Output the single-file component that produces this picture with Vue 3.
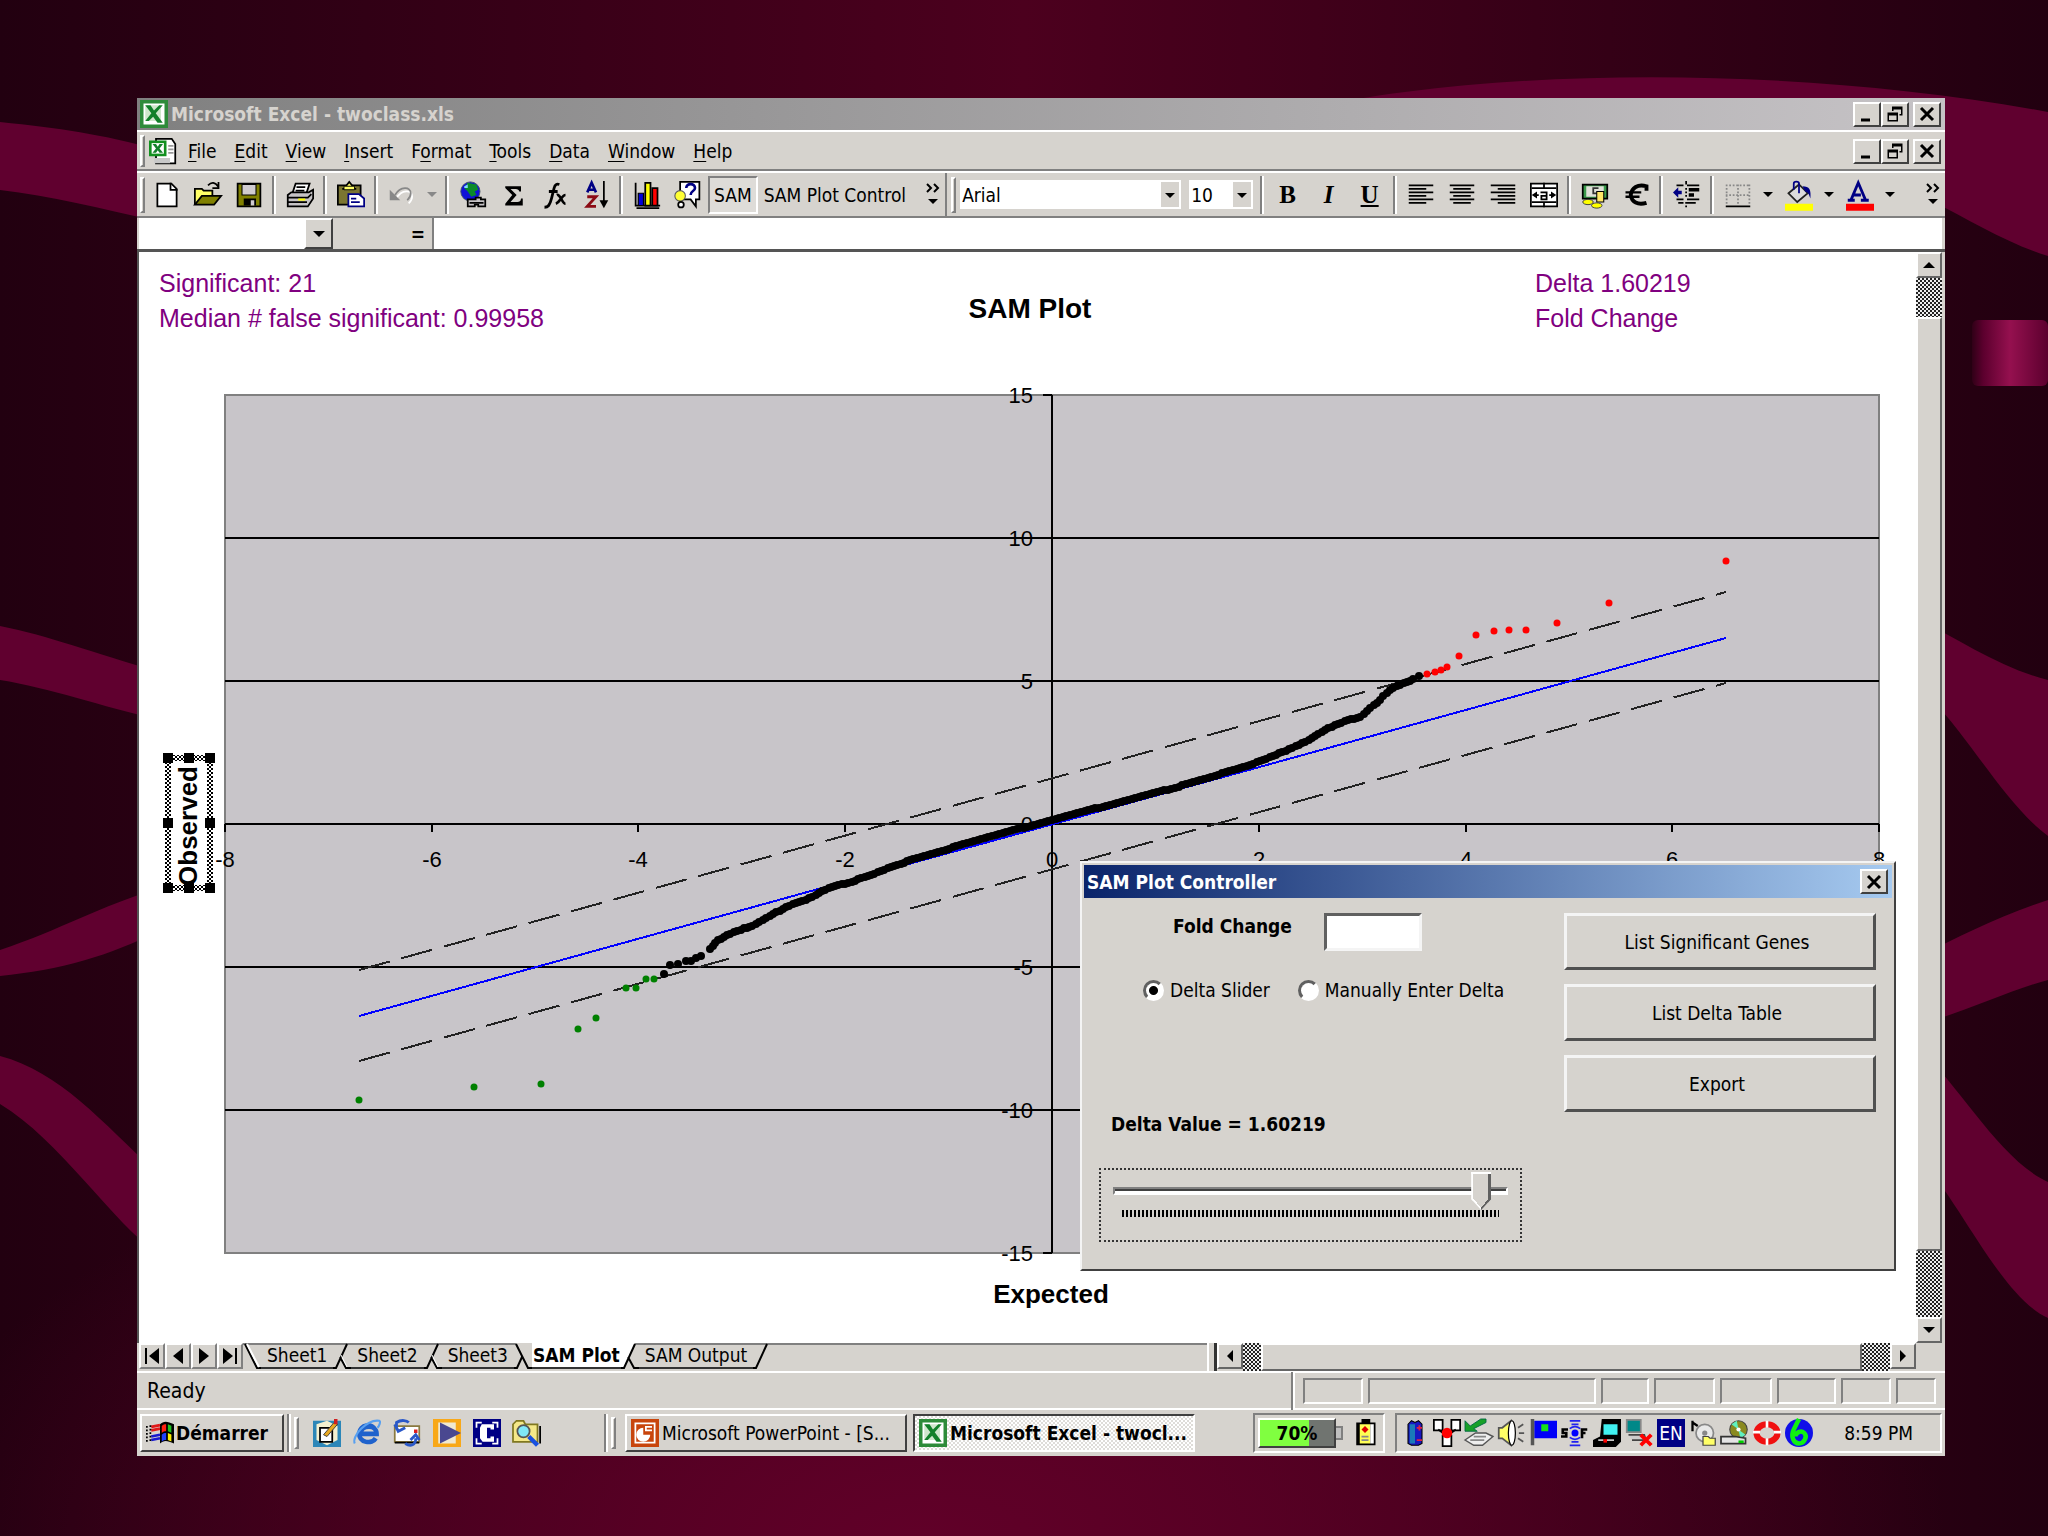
<template>
  <div class="desktop">
    <!-- Slide background -->
    <svg class="waves" viewBox="0 0 2048 1536" preserveAspectRatio="none" aria-hidden="true">
      <defs>
        <linearGradient id="knot" x1="0" x2="1" y1="0" y2="0">
          <stop offset="0" stop-color="#5c002e" stop-opacity="0.2" />
          <stop offset="0.15" stop-color="#5c002e" />
          <stop offset="0.5" stop-color="#95104f" />
          <stop offset="1" stop-color="#5c002e" />
        </linearGradient>
      </defs>
      <g fill="#60002f">
        <path d="M0 122 C60 128 100 134 160 150 V222 C100 208 50 196 0 190 Z" />
        <path d="M0 626 C50 636 90 652 160 672 V720 C100 706 50 688 0 680 Z" />
        <path d="M160 888 C100 906 60 930 0 950 V976 C60 970 110 956 160 930 Z" />
        <path d="M0 1056 C60 1072 100 1120 160 1176 V1256 C110 1220 60 1140 0 1104 Z" />
        <path d="M1300 110 C1500 66 1800 66 2048 112 V256 C1980 236 1900 170 1800 150 Z" />
        <path d="M1920 620 C1960 640 2000 668 2048 680 V836 C2000 800 1960 720 1920 690 Z" />
        <path d="M2048 900 C2000 916 1960 936 1920 956 V1024 C1960 1014 2010 990 2048 980 Z" />
        <path d="M1920 1050 C1960 1086 2000 1160 2048 1182 V1318 C2000 1296 1960 1200 1920 1160 Z" />
      </g>
      <rect x="1972" y="320" width="76" height="66" rx="6" fill="url(#knot)" />
    </svg>

    <main class="window">
      <header class="title-bar">
        <svg class="icon" viewBox="0 0 16 16" v-html="icons.excel"></svg>
        <span class="title-text">Microsoft Excel - twoclass.xls</span>
        <span class="win-buttons">
          <button v-for="b in winButtons" :key="b" :class="['win-button', b]" :aria-label="b">
            <svg viewBox="0 0 12 12" v-html="icons[b]"></svg>
          </button>
        </span>
      </header>

      <nav class="menu-bar">
        <span class="grip"></span>
        <svg class="icon" viewBox="0 0 16 16" v-html="icons.book"></svg>
        <button v-for="m in menus" :key="m.text" class="menu-item">
          {{ m.text.slice(0, m.key) }}<u>{{ m.text[m.key] }}</u>{{ m.text.slice(m.key + 1) }}
        </button>
        <span class="win-buttons">
          <button v-for="b in winButtons" :key="b" :class="['win-button', b]" :aria-label="b">
            <svg viewBox="0 0 12 12" v-html="icons[b]"></svg>
          </button>
        </span>
      </nav>

      <div class="toolbars">
        <div class="toolbar standard">
          <span class="grip"></span>
          <template v-for="(t, i) in standardTools" :key="i">
            <span v-if="t === '|'" class="tool-sep"></span>
            <button v-else-if="t === 'v'" class="drop disabled" aria-label="More"></button>
            <button v-else class="tool" :aria-label="t">
              <svg class="icon" viewBox="0 0 16 16" v-html="icons[t]"></svg>
            </button>
          </template>
          <button class="text-tool pressed">SAM</button>
          <button class="text-tool">SAM Plot Control</button>
          <button class="more" aria-label="More buttons">
            <svg viewBox="0 0 16 28" v-html="icons.more"></svg>
          </button>
        </div>
        <div class="toolbar format">
          <span class="grip"></span>
          <span class="combo font">
            <select aria-label="Font"><option>Arial</option></select>
          </span>
          <span class="combo size">
            <select aria-label="Font size"><option>10</option></select>
          </span>
          <template v-for="(t, i) in formatTools" :key="i">
            <span v-if="t === '|'" class="tool-sep"></span>
            <button v-else-if="t === 'v'" class="drop" aria-label="More"></button>
            <button v-else-if="t.length === 1" :class="['tool', 'letter', 'letter-' + t]">{{ t }}</button>
            <button v-else class="tool" :aria-label="t">
              <svg class="icon" viewBox="0 0 16 16" v-html="icons[t]"></svg>
            </button>
          </template>
          <button class="more" aria-label="More buttons">
            <svg viewBox="0 0 16 28" v-html="icons.more"></svg>
          </button>
        </div>
      </div>

      <div class="formula-bar">
        <input class="name-box" type="text" aria-label="Name box" />
        <button class="name-drop" aria-label="Names"><i class="arrow down"></i></button>
        <button class="equals">=</button>
        <input class="formula" type="text" aria-label="Formula" />
      </div>

      <section class="sheet">
        <svg class="chart" viewBox="0 0 1777 1091" role="img" aria-label="SAM Plot">
          <rect x="86" y="143" width="1654" height="858" fill="#c8c5c9" stroke="#808080" stroke-width="2" />
          <g stroke="#000" stroke-width="2" shape-rendering="crispEdges">
            <line v-for="v in [10, 5, 0, -5, -10]" :key="v" x1="86" x2="1740" :y1="py(v)" :y2="py(v)" />
            <line x1="913" x2="913" y1="143" y2="1001" />
            <line v-for="v in yTicks" :key="'y' + v" x1="904" x2="913" :y1="py(v)" :y2="py(v)" />
            <line v-for="v in xTicks" :key="'x' + v" :x1="px(v)" :x2="px(v)" y1="572" y2="580" />
          </g>
          <g class="tick-text">
            <text v-for="v in yTicks" :key="'ty' + v" x="894" :y="py(v) + 8" text-anchor="end">{{ v }}</text>
            <text v-for="v in xTicks" :key="'tx' + v" :x="px(v)" y="615" text-anchor="middle">{{ v }}</text>
          </g>
          <g stroke-width="2" shape-rendering="crispEdges">
            <line :x1="px(-6.7)" :y1="py(-6.7)" :x2="px(6.52)" :y2="py(6.52)" stroke="#0000ff" />
            <line v-for="d in [1.6, -1.6]" :key="d" :x1="px(-6.7)" :y1="py(-6.7 + d)" :x2="px(6.52)" :y2="py(6.52 + d)"
              stroke="#222" stroke-dasharray="32 12" />
          </g>
          <circle v-for="(p, i) in curveDots" :key="'c' + i" :cx="px(p[0])" :cy="py(p[1])" r="4" fill="#000" />
          <circle v-for="(p, i) in positive" :key="'p' + i" :cx="px(p[0])" :cy="py(p[1])" r="3.5" fill="#ff0000" />
          <circle v-for="(p, i) in negative" :key="'n' + i" :cx="px(p[0])" :cy="py(p[1])" r="3.5" fill="#008000" />

          <g class="note-text">
            <text x="20" y="40">Significant: 21</text>
            <text x="20" y="75">Median # false significant: 0.99958</text>
            <text x="1396" y="40">Delta 1.60219</text>
            <text x="1396" y="75">Fold Change</text>
          </g>
          <text class="plot-title" x="891" y="66" text-anchor="middle">SAM Plot</text>
          <text class="axis-title" x="912" y="1051" text-anchor="middle">Expected</text>

          <!-- selected axis title -->
          <defs>
            <pattern id="hatch" width="4" height="4" patternUnits="userSpaceOnUse">
              <rect width="4" height="4" fill="#fff" />
              <rect width="2" height="2" fill="#000" />
              <rect x="2" y="2" width="2" height="2" fill="#000" />
            </pattern>
          </defs>
          <rect x="29" y="506" width="42" height="130" fill="none" stroke="url(#hatch)" stroke-width="6" />
          <g fill="#000">
            <template v-for="hx in [24, 45, 66]" :key="hx">
              <rect v-for="hy in [501, 566, 631]" v-show="hx !== 45 || hy !== 566" :key="hy" :x="hx" :y="hy" width="10" height="10" />
            </template>
          </g>
          <text class="axis-title" transform="translate(58 574) rotate(-90)" text-anchor="middle">Observed</text>
        </svg>

        <form class="dialog" @submit.prevent>
          <div class="dialog-title">
            <span>SAM Plot Controller</span>
            <button type="button" class="win-button" aria-label="close">
              <svg viewBox="0 0 12 12" v-html="icons.close"></svg>
            </button>
          </div>
          <div class="dialog-body">
            <div class="settings">
              <div class="fold-row">
                <label for="fold">Fold Change</label>
                <input id="fold" v-model="fold" type="text" />
              </div>
              <div class="mode-row">
                <input id="slider-mode" v-model="mode" type="radio" name="mode" value="slider" />
                <label for="slider-mode">Delta Slider</label>
                <input id="manual-mode" v-model="mode" type="radio" name="mode" value="manual" />
                <label for="manual-mode">Manually Enter Delta</label>
              </div>
              <label class="delta-label" for="delta">Delta Value = 1.60219</label>
              <div class="slider-box">
                <input id="delta" v-model="delta" type="range" min="0" max="100" />
                <div class="slider-ticks"></div>
              </div>
            </div>
            <div class="actions">
              <button v-for="a in actions" :key="a" type="button">{{ a }}</button>
            </div>
          </div>
        </form>

        <div class="scroll vertical">
          <button class="scroll-button" aria-label="Scroll up"><i class="arrow up"></i></button>
          <span class="dither dither-top"></span>
          <span class="thumb"></span>
          <span class="dither dither-bottom"></span>
          <button class="scroll-button" aria-label="Scroll down"><i class="arrow down"></i></button>
        </div>
      </section>

      <div class="tab-row">
        <button v-for="n in ['first', 'prev', 'next', 'last']" :key="n" class="nav-button" :aria-label="n">
          <svg viewBox="0 0 20 20" v-html="icons[n]"></svg>
        </button>
        <nav class="tabs">
          <template v-for="t in tabs" :key="t.text">
            <svg class="slant" viewBox="0 0 18 26" v-html="slants[t.edge]"></svg>
            <button :class="['tab', { active: t.active }]">{{ t.text }}</button>
          </template>
          <svg class="slant" viewBox="0 0 18 26" v-html="slants.end"></svg>
        </nav>
        <span class="splitter"></span>
        <div class="scroll horizontal">
          <button class="scroll-button" aria-label="Scroll left"><i class="arrow left"></i></button>
          <span class="dither dither-left"></span>
          <span class="thumb"></span>
          <span class="dither dither-right"></span>
          <button class="scroll-button" aria-label="Scroll right"><i class="arrow right"></i></button>
        </div>
        <span class="corner"></span>
      </div>

      <div class="status-bar">
        <span class="ready">Ready</span>
        <span class="tool-sep"></span>
        <span v-for="n in 8" :key="n" :class="['cell', 'cell-' + n]"></span>
      </div>

      <footer class="taskbar">
        <button class="start">
          <svg class="icon" viewBox="0 0 16 16" v-html="icons.windows"></svg>Démarrer
        </button>
        <span class="tool-sep"></span>
        <span class="grip"></span>
        <div class="launch">
          <button v-for="q in launch" :key="q" :aria-label="q">
            <svg class="icon" viewBox="0 0 16 16" v-html="icons[q]"></svg>
          </button>
        </div>
        <span class="tool-sep"></span>
        <span class="grip"></span>
        <button class="task">
          <svg class="icon" viewBox="0 0 16 16" v-html="icons.powerpoint"></svg>
          <span>Microsoft PowerPoint - [S...</span>
        </button>
        <button class="task current">
          <svg class="icon" viewBox="0 0 16 16" v-html="icons.excel"></svg>
          <span>Microsoft Excel - twocl...</span>
        </button>
        <div class="power">
          <span class="gauge">70%</span><span class="nub"></span>
          <svg class="icon" viewBox="0 0 16 16" v-html="icons.battery"></svg>
        </div>
        <div class="tray">
          <template v-for="t in tray" :key="t">
            <span v-if="t === 'EN'" class="lang">EN</span>
            <svg v-else class="icon" viewBox="0 0 16 16" v-html="icons[t]"></svg>
          </template>
          <time>8:59 PM</time>
        </div>
      </footer>
    </main>
  </div>
</template>

<script setup>
import { ref, computed } from 'vue'

const fold = ref('')
const mode = ref('slider')
const delta = ref(96)

const winButtons = ['minimize', 'restore', 'close']
const menus = [
  { text: 'File', key: 0 },
  { text: 'Edit', key: 0 },
  { text: 'View', key: 0 },
  { text: 'Insert', key: 0 },
  { text: 'Format', key: 1 },
  { text: 'Tools', key: 0 },
  { text: 'Data', key: 0 },
  { text: 'Window', key: 0 },
  { text: 'Help', key: 0 }
]
const standardTools = ['new', 'open', 'save', '|', 'print', '|', 'paste', '|', 'undo', 'v', '|', 'globe', 'sum', 'fx', 'sort', '|', 'chart', 'help']
const formatTools = ['|', 'B', 'I', 'U', '|', 'left', 'center', 'right', 'merge', '|', 'money', 'euro', '|', 'indent', '|', 'borders', 'v', 'fill', 'v', 'color', 'v']
const actions = ['List Significant Genes', 'List Delta Table', 'Export']
const tabs = [
  { text: 'Sheet1', edge: 'back' },
  { text: 'Sheet2', edge: 'slash' },
  { text: 'Sheet3', edge: 'slash' },
  { text: 'SAM Plot', edge: 'toActive', active: true },
  { text: 'SAM Output', edge: 'fromActive' }
]
const launch = ['notes', 'explorer', 'outlook', 'player', 'citrix', 'search']
const tray = ['cell', 'nodes', 'eject', 'speaker', 'flag', 'signal', 'laptop', 'network', 'EN', 'sound', 'disk', 'ring', 'swirl']

// chart
const yTicks = [15, 10, 5, 0, -5, -10, -15]
const xTicks = [-8, -6, -4, -2, 0, 2, 4, 6, 8]
const px = (v) => Math.round(913 + v * 103.4)
const py = (v) => Math.round(572 - v * 28.6)

const positive = [
  [3.63, 5.24], [3.7, 5.3], [3.76, 5.37], [3.82, 5.5], [3.94, 5.87], [4.1, 6.61],
  [4.27, 6.74], [4.42, 6.79], [4.58, 6.79], [4.88, 7.04], [5.39, 7.72], [6.52, 9.21]
]
const negative = [
  [-6.7, -9.65], [-5.59, -9.21], [-4.94, -9.09], [-4.58, -7.17], [-4.41, -6.8],
  [-4.12, -5.75], [-4.02, -5.75], [-3.93, -5.43], [-3.85, -5.43]
]
const curve = [
  [-3.75, -5.25], [-3.69, -4.93], [-3.62, -4.88], [-3.54, -4.8], [-3.49, -4.78], [-3.44, -4.7],
  [-3.39, -4.62], [-3.31, -4.38], [-3.23, -4.06], [-3.11, -3.84], [-2.98, -3.65], [-2.9, -3.56],
  [-2.73, -3.2], [-2.54, -2.85], [-2.35, -2.6], [-2.16, -2.24], [-1.97, -2.05], [-1.78, -1.83],
  [-1.59, -1.55], [-1.34, -1.23], [-0.96, -0.82], [-0.58, -0.41], [0, 0.13], [0.56, 0.68],
  [1.19, 1.27], [1.82, 1.96], [2.01, 2.19], [2.26, 2.56], [2.45, 2.88], [2.64, 3.29],
  [2.83, 3.6], [2.98, 3.74], [3.08, 4.06], [3.17, 4.34], [3.27, 4.7], [3.4, 4.93],
  [3.49, 5.06], [3.55, 5.16]
]
const curveDots = computed(() => {
  const dots = [curve[0]]
  for (let i = 1; i < curve.length; i++) {
    const [x0, y0] = curve[i - 1]
    const [x1, y1] = curve[i]
    const steps = x1 < -3.3 || x1 > 3.5 ? 1 : Math.ceil((x1 - x0) / 0.035)
    for (let s = 1; s <= steps; s++) {
      dots.push([x0 + ((x1 - x0) * s) / steps, y0 + ((y1 - y0) * s) / steps])
    }
  }
  return dots
})

const slants = {
  back: '<path d="M2 1L14 25H18" fill="none" stroke="#000" stroke-width="2"/><path d="M4 1L16 24" stroke="#fff" stroke-width="2"/>',
  slash: '<path d="M0 25H3L14 1M7 14L13 25H18" fill="none" stroke="#000" stroke-width="2"/><path d="M8 12L14 24" stroke="#fff" stroke-width="1"/>',
  toActive: '<path d="M2 1L15 25L18 25V0H2Z" fill="#fff"/><path d="M2 1L13 25L18 25V0H2Z" fill="#d6d3ce"/><path d="M0 25H3L8 14M2 1L14 25H18" fill="none" stroke="#000" stroke-width="2"/>',
  fromActive: '<path d="M0 0H14L3 25H0Z" fill="#fff"/><path d="M0 25H3L14 1M7 14L13 25H18" fill="none" stroke="#000" stroke-width="2"/>',
  end: '<path d="M0 25H3L14 1" fill="none" stroke="#000" stroke-width="2"/>'
}

const lines = (rows) => rows.map(([x, y, w]) => `<rect x="${x}" y="${y}" width="${w}" height="1"/>`).join('')

const icons = {
  minimize: '<path d="M2 9h6v2H2z"/>',
  restore: '<path d="M4 1h7v6H9v-1h1V3H5v1H4zM1 5h7v6H1zM2 7v3h5V7z" fill-rule="evenodd"/>',
  close: '<path d="M2 2L10 10M10 2L2 10" stroke="#000" stroke-width="2"/>',
  more: '<path d="M1 3l4 4-4 4M8 3l4 4-4 4" fill="none" stroke="#000" stroke-width="2"/><path d="M2 18h10l-5 5z"/>',
  first: '<path d="M3 2h2v16H3zM17 2v16L7 10z"/>',
  prev: '<path d="M15 2v16L5 10z"/>',
  next: '<path d="M5 2v16L15 10z"/>',
  last: '<path d="M3 2v16L13 10z"/><path d="M15 2h2v16h-2z"/>',
  excel: '<rect width="16" height="16" fill="#2e8b3a"/><path d="M2 2h12v12H2z" fill="#fff"/><path d="M3 3h9v9H3z" fill="#cfe6cc"/><path d="M3 3h3l2 3 3-3h2L9 7.500l4 5.500h-3L7.500 9.500 5 12H3l3.500-4.500z" fill="#12802a"/><path d="M3 12h6v1.500H3z" fill="#fff"/>',
  powerpoint: '<rect width="16" height="16" fill="#c8450c"/><path d="M2 2h12v12H2z" fill="#fff"/><path d="M3 3h10v10H3z" fill="#c8450c"/><path d="M7 5v4h4a4 4 0 1 1-4-4M8 4h4v1H9v1h3v1H8z" fill="#fff"/>',
  book: '<path d="M5 1h8l2 3v11H4V1z" fill="#fff" stroke="#000"/><path d="M3 12h9v3H3z" fill="#c8c8c8"/><path d="M11 5h3M11 7h3M11 9h3" stroke="#999"/><path d="M0 2h10v9H0z" fill="#12901f"/><path d="M1.500 3.500h7v6h-7z" fill="#fff"/><path d="M2 4h2l1 1.500L6 4h2L6 6.500 8 9H6L5 7.500 4 9H2l2-2.500z" fill="#12802a"/>',
  new: '<path d="M2.500 1.500h8l3 3v10h-11z" fill="#fff" stroke="#000"/><path d="M10 1v4h4" fill="none" stroke="#000"/>',
  open: '<path d="M.500 13.500v-9h4l1 1h5v3" fill="#ffff66" stroke="#000"/><path d="M.500 13.500l4-5h11l-4 5z" fill="#808000" stroke="#000"/><path d="M8 2.500c2-2 4-2 6 1M14 .5v3.500h-3.500" fill="none" stroke="#000"/>',
  save: '<path d="M1.500 1.500h13v13h-13z" fill="#808000" stroke="#000"/><path d="M4 2h8v6H4z" fill="#d0ccd0" stroke="#000" stroke-width=".6"/><path d="M5 10h7v4H5z"/><path d="M9 11h2v3H9z" fill="#d0ccd0"/>',
  print: '<path d="M5.500 1.500h8l-2 6h-8z" fill="#fff" stroke="#000"/><path d="M6 3.500h5M5.500 5.500h5" stroke="#000"/><path d="M1 8l2-1.500h10L15.500 5v5l-3 4.500H1z" fill="#c6c3c6" stroke="#000"/><path d="M1 9.500h11.500l2-2M1 12h11" stroke="#000" fill="none"/><path d="M7 10h4v1.200H7z" fill="#ffff00"/>',
  paste: '<path d="M.500 2.500h13v11H.500z" fill="#7b7531" stroke="#000"/><path d="M3 4.500h8M5 3l2-2.500L9 3" fill="#ff6" stroke="#000"/><path d="M4 3h6v2H4z" fill="#ffff66" stroke="#000" stroke-width=".5"/><path d="M6.500 7.500h6l3 2.500v4.500h-9z" fill="#fff" stroke="#000084"/><path d="M8 10h3M8 12h5" stroke="#000084"/>',
  undo: '<path d="M4 9c3-5 9-5 9-1 0 2-1 3-2 4" fill="none" stroke="#fff" transform="translate(.8 .8)"/><path d="M1 5v6h6z" fill="#888"/><path d="M4 8c3-5 9-5 9-1 0 2-1 3-2 4" fill="none" stroke="#888"/>',
  globe: '<circle cx="6.500" cy="6" r="5.500" fill="#1010d8" stroke="#456" stroke-width=".5"/><path d="M5 1l5 1 1 3-2 1 1 2-3 1-2-3-2-2z" fill="#0a8a2a"/><path d="M3 3l2-1v2H3z" fill="#7fd8ff"/><path d="M5 10.500h4.500v-1h3v1H15v4h-4v-1H9v1H5z" fill="#c6c3c6" stroke="#000"/><path d="M6 12.500h8" stroke="#000"/>',
  sum: '<path d="M3 3h9v3h-1c0-1-1-1.500-2-1.500H6L9.500 8 6 12h4c1 0 2-.5 2-2h1v4H3v-1l4-5-4-4z"/>',
  fx: '<path d="M2 15c2 0 3-1 4-5l1.500-6C8 2 9 1.500 10.500 2M4.500 6h5" fill="none" stroke="#000" stroke-width="1.600"/><path d="M9 8c2-1 3 5 5 5M14 8c-2 0-3 4-5.500 5" fill="none" stroke="#000" stroke-width="1.500"/>',
  sort: '<path d="M3 6.500L5.500 1 8 6.500M4 5h3" fill="none" stroke="#000084" stroke-width="1.500"/><path d="M3 9h5L3 14.500h5" fill="none" stroke="#8b0a14" stroke-width="1.600"/><path d="M12.500 0v13" stroke="#000"/><path d="M10 11h5l-2.500 4.500z"/>',
  chart: '<path d="M1.500 1v13h14" fill="none" stroke="#000"/><path d="M3 7h3v7H3z" fill="#0000d8" stroke="#000" stroke-width=".7"/><path d="M7 1h3v13H7z" fill="#ffff00" stroke="#000"/><path d="M11 4h3v10h-3z" fill="#ff0000" stroke="#000"/><path d="M2 15.500h13" stroke="#000"/>',
  help: '<path d="M3.500.500h11v10h-2v4l-3-4h-6z" fill="#fff" stroke="#000"/><path d="M7 4c0-3 5-3 5 0 0 2-2.500 1.500-2.500 4" fill="none" stroke="#000084" stroke-width="1.500"/><circle cx="3.500" cy="8.500" r="3" fill="#ffff33" stroke="#555" stroke-width=".6"/><circle cx="4" cy="13.500" r="1.600" fill="#fff" stroke="#000"/>',
  left: lines([[1, 2, 14], [1, 4, 10], [1, 6, 14], [1, 8, 10], [1, 10, 14], [1, 12, 10]]),
  center: lines([[1, 2, 14], [3, 4, 10], [1, 6, 14], [3, 8, 10], [1, 10, 14], [3, 12, 10]]),
  right: lines([[1, 2, 14], [5, 4, 10], [1, 6, 14], [5, 8, 10], [1, 10, 14], [5, 12, 10]]),
  merge: '<path d="M.500 1.500h15v13H.500z" fill="#fff" stroke="#000"/><path d="M1 4h14M1 12h14M8 1v3M8 12v3" stroke="#000"/><path d="M1 8l3-2v4zM15 8l-3-2v4z"/><path d="M3 8h2M11 8h2M6 6.500h3.500v4H6.500V8.500h3" fill="none" stroke="#000"/>',
  money: '<path d="M1 2h14v8H1z" fill="#3a9a4a" stroke="#000"/><path d="M3 3h10v6H3z" fill="#e0e0d8"/><path d="M10 4H7v3h3" fill="none" stroke="#333"/><path d="M9 6h4v6H9z" fill="#ffe766" stroke="#000" stroke-width=".6"/><ellipse cx="4" cy="12" rx="3" ry="1.500" fill="#ffff00" stroke="#333" stroke-width=".5"/><ellipse cx="9" cy="14" rx="3" ry="1.500" fill="#ffff00" stroke="#333" stroke-width=".5"/>',
  euro: '<path d="M14 5.500V3C9 1.500 5.500 4 5 8c.5 4 4 6 9 4.500" fill="none" stroke="#000" stroke-width="2.200"/><path d="M2 6.500h9M2 9h8" stroke="#000" stroke-width="1.400"/>',
  indent: '<path d="M2 2.500h4M8 2.500h7M2 10.500h4M8 10.500h7M3 12.500h3M8 12.500h5" stroke="#000"/><path d="M7.500 0v2M7.500 4v1M7.500 6v1M7.500 8v1M7.500 12v1M7.500 14v1" stroke="#000"/><path d="M9 4h6v2H9zM9 7h3v2H9z"/><path d="M0 6.500l3-3v2h2v2H3v2z" fill="#000084"/>',
  borders: '<path d="M1.500 2v11M14.500 2v11M8 2v11M1 2.500h14M1 8h14" stroke="#888" stroke-dasharray="1 1"/><path d="M1 14h14v1H1z"/>',
  fill: '<path d="M0 13h16v4H0z" fill="#ffff00"/><path d="M2 7l6-5 5 5-6 5z" fill="#dcdcdc" stroke="#222"/><path d="M5 5V1.500C5 0 8 0 8 1.500V7" fill="none" stroke="#000084"/><path d="M10 3c4 0 5 2 4.500 7-1-3-1-3-3-4z" fill="#000084"/>',
  color: '<path d="M0 13h16v4H0z" fill="#ff0000"/><path d="M1 11h4M8.500 11h4.500M3 10.500L7 1l4 9.500M4.500 8h4" fill="none" stroke="#000084" stroke-width="1.600"/>',
  windows: '<path d="M8 3c2-2 4-2 8 0v11c-4-2-6-2-8 0z" fill="#000"/><path d="M9 4c1-1 1.500-1 2.500-1v4C10.500 7 10 7 9 8z" fill="#ff2010"/><path d="M12.500 3l2 .8v4l-2-.8z" fill="#20c020"/><path d="M9 9c1-1 1.500-1 2.500-1v4c-1 0-1.500 0-2.500 1z" fill="#2040ff"/><path d="M12.500 8l2 .8v4l-2-.8z" fill="#ffee00"/><path d="M3 4.500l5-1M3 6.500l5-1" stroke="#e01818" stroke-width="1.500"/><path d="M3 10l5-1M3 12l5-1" stroke="#1818d0" stroke-width="1.500"/><path d="M.500 4v9M2.500 3.500v10" stroke="#000" stroke-dasharray="1 1"/>',
  notes: '<path d="M0 1h16v15H0z" fill="#2c86b8"/><path d="M2 3l6-2 6 3v8l-6 3-6-3z" fill="#f4f0d0"/><path d="M4 5h7v8H4z" fill="#fff" stroke="#000"/><path d="M6 9l6-7 2 1-6 7z" fill="#e8a820" stroke="#333" stroke-width=".5"/><path d="M12 0h2v3h-2z" fill="#d02020"/>',
  explorer: '<path d="M13 6.500A5 5 0 0 0 3.500 8c0 6 7.500 6.500 9.500 3M4 8.500h9.500C13.500 3 5 3 4 8.500" fill="none" stroke="#1f62cc" stroke-width="2.600"/><path d="M1 14C-1 10 8 0 15 1c1 .5 0 3-1 4" fill="none" stroke="#58a0f0" stroke-width="1.200"/>',
  outlook: '<path d="M1 4h14v9H1z" fill="#fff" stroke="#8a7a40"/><path d="M1 13.500h14" stroke="#000"/><path d="M12 6h2v2h-2z" fill="#e02020"/><path d="M2 6V2c3-2 6-1 7 0M1 3l2 4 4-2" fill="none" stroke="#2a58c8" stroke-width="1.600"/><path d="M7 14c3 2 6 1 6-3M10 12l3-3 2 3" fill="none" stroke="#2a58c8" stroke-width="1.600"/>',
  player: '<path d="M0 0h16v16H0z" fill="#f8a818"/><path d="M3 2h10v12H3z" fill="#f0e8d0"/><path d="M4 2l12 6-12 6z" fill="#4a4890"/>',
  citrix: '<path d="M0 0h16v16H0z" fill="#000084"/><path d="M2 5V2h3M11 2h3v3M2 11v3h3M14 11v3h-3" fill="none" stroke="#fff"/><path d="M12 6V3H5L4 5v6l1.500 2H12v-3h-2v1H8V5h2v1z" fill="#fff"/>',
  search: '<path d="M0 3l2-2h4l1 2h7v10H0z" fill="#f4e888" stroke="#807820"/><path d="M15.500 4v10" stroke="#000"/><circle cx="6" cy="7" r="3.500" fill="#7fe8f8" stroke="#555"/><path d="M9 10l5 5" stroke="#1850e0" stroke-width="2.500"/>',
  battery: '<path d="M6 0h5v2h3v13H3V2h3z" fill="#000"/><path d="M5 3h6v11H5z" fill="#ffff55"/><path d="M11 3h2v11h-2z" fill="#fff"/><path d="M8 4l2 2-2 2-2-2z" fill="#d00"/><path d="M6 10h4M6 12h4" stroke="#888"/>',
  cell: '<path d="M4 3l2-2 2 1 2-1 2 2v11l-2 1H6l-2-1z" fill="#1818c0" stroke="#000" stroke-width=".6"/><path d="M5 3h3v11H5z" fill="#1a7ab8"/><path d="M9 5h3M10.500 3.500v3M9 12h3" stroke="#e02040"/>',
  nodes: '<path d="M.500.500h5v6h-5zM10.500.500h5v6h-5zM5.500 9.500h5v6h-5z" fill="#fff" stroke="#000"/><path d="M3 6l4 3M13 6l-4 3" stroke="#000"/><circle cx="8" cy="8" r="3" fill="#f00"/>',
  eject: '<path d="M0 12l6-4h6l4 2-6 5H5z" fill="#eee" stroke="#555" stroke-width=".8"/><path d="M3 12h8M5 10h7" stroke="#888"/><path d="M0 1v6h7L5 5.500 12 2V0H9L3 4z" fill="#18a028" stroke="#064" stroke-width=".5"/>',
  speaker: '<path d="M1 5h2l5-4v14l-5-4H1z" fill="#ffff66" stroke="#555"/><ellipse cx="8.500" cy="8" rx="2" ry="7" fill="#fff" stroke="#000" stroke-width=".7"/><path d="M12 5l3-2M12.500 8h3M12 11l3 2" stroke="#555"/>',
  flag: '<path d="M3 1h13v10H3z" fill="#0000f8"/><path d="M7 3h4v4H7z" fill="#18e018"/><path d="M1 0h2v15H1z" fill="#555"/>',
  signal: '<path d="M5 1h6M6 3h4M5 15h6M6 13h4M5 5.500c2-1.500 4-1.500 6 0M5 10.500c2 1.500 4 1.500 6 0" stroke="#2020f0" fill="none"/><circle cx="8" cy="8" r="2" fill="#00f"/><path d="M4 6H1v2h2v2H0M12 11V6h3M12 8h2" fill="none" stroke="#000" stroke-width="1.500"/>',
  laptop: '<path d="M5 0h11v13l-3 3H0v-4l4-2z" fill="#000"/><path d="M6 3h8v6H6z" fill="#40f0f0"/><path d="M3 12h3M8 12h4" stroke="#c8c8c8"/><path d="M6 11.500h2v2H6z" fill="#f00"/>',
  network: '<path d="M1 .500h8v7H1z" fill="#008888" stroke="#888"/><path d="M2 9h9l1 3H4" fill="#ccc" stroke="#444"/><path d="M9 9l6 6M15 9l-6 6" stroke="#f00" stroke-width="2.200"/>',
  sound: '<path d="M2 1v6M2 2l3 2" stroke="#000" stroke-width="1.300"/><circle cx="9" cy="8" r="5" fill="#e8e8e8" stroke="#888"/><circle cx="9" cy="8" r="1.500" fill="#888"/><path d="M8 10h3l1 1h3v4H8z" fill="#ffff66" stroke="#444" stroke-width=".7"/>',
  disk: '<circle cx="10" cy="6" r="5" fill="#8a8a20" stroke="#444" stroke-width=".6"/><path d="M10 6L6 3l3-2zM10 6l4 3-3 2z" fill="#60f0c0"/><circle cx="10" cy="6" r="1.200" fill="#fff"/><path d="M0 10h8l6 1v3H0z" fill="#e4e4e4" stroke="#333"/><path d="M10 13h3" stroke="#0c0" stroke-width="1.500"/>',
  ring: '<ellipse cx="8" cy="8" rx="6" ry="5" fill="none" stroke="#f01010" stroke-width="3.500"/><path d="M8 1v4M8 11v4M0 7.500h4M12 7.500h4" stroke="#fff" stroke-width="1.500"/>',
  swirl: '<circle cx="8" cy="8" r="8" fill="#1010e8"/><path d="M8 0L5 6C3 10 5 14 8 14s5-4 3-6-5 0-5 2" fill="none" stroke="#10f010" stroke-width="2.600"/>'
}
</script>

<style>
body {
  background: #2a0013;
}
</style>

<style scoped>
.desktop {
  position: relative;
  min-height: 100vh;
  box-sizing: border-box;
  padding: 98px 103px 80px 137px;
  background:
    radial-gradient(ellipse 50% 30% at 45% 100%, #600028, transparent),
    linear-gradient(90deg, #220010 0%, #4c001e 50%, #220010 100%);
  font-family: "DejaVu Sans Condensed", "DejaVu Sans", "Noto Sans", sans-serif;
  font-size: 19px;
  color: #000;
}

.waves {
  position: absolute;
  inset: 0;
  width: 100%;
  height: 100%;
}

button,
input,
select {
  font: inherit;
  color: inherit;
  margin: 0;
  padding: 0;
  border: 0;
  background: none;
  border-radius: 0;
  box-sizing: border-box;
  outline: none;
}

.window {
  position: relative;
  background: #d6d3ce;
}

.icon {
  width: 28px;
  height: 28px;
  flex: none;
  overflow: visible;
}

.grip {
  flex: none;
  width: 5px;
  height: 32px;
  box-sizing: border-box;
  border: 2px solid;
  border-color: #fff #808080 #808080 #fff;
}

.tool-sep {
  flex: none;
  width: 4px;
  height: 38px;
  margin: 0 3px;
  box-sizing: border-box;
  border-left: 2px solid #808080;
  border-right: 2px solid #fff;
}

/* title */
.title-bar {
  display: flex;
  align-items: center;
  height: 32px;
  padding: 0 4px 0 3px;
  background: linear-gradient(90deg, #808080, #c6c3c6);
}

.title-text {
  flex: 1;
  margin-left: 3px;
  font-weight: bold;
  color: #d6d3ce;
}

.win-buttons {
  display: flex;
  margin-left: auto;
}

.win-button {
  width: 28px;
  height: 25px;
  display: flex;
  align-items: center;
  justify-content: center;
  background: #d6d3ce;
  border: 2px solid;
  border-color: #fff #404040 #404040 #fff;
}

.win-button.close {
  margin-left: 4px;
}

.win-button svg {
  width: 18px;
  height: 18px;
}

/* menu */
.menu-bar {
  display: flex;
  align-items: center;
  height: 41px;
  padding: 1px 4px 0 3px;
  box-sizing: border-box;
  border-top: 2px solid #fff;
  border-bottom: 2px solid #808080;
}

.menu-bar .icon {
  margin: 0 2px 0 4px;
}

.menu-item {
  padding: 0 9px;
}

.menu-item u {
  text-underline-offset: 3px;
}

/* toolbars */
.toolbars {
  display: flex;
  height: 47px;
  box-sizing: border-box;
  border-top: 2px solid #fff;
  border-bottom: 2px solid #808080;
}

.toolbar {
  display: flex;
  align-items: center;
  padding-left: 3px;
}

.toolbar .grip {
  height: 36px;
  margin-right: 1px;
}

.standard {
  flex: none;
}

.format {
  flex: 1;
  min-width: 0;
  padding-left: 4px;
  border-left: 2px solid #808080;
}

.format .grip {
  margin-right: 4px;
}

.tool {
  flex: none;
  width: 41px;
  height: 38px;
  display: flex;
  align-items: center;
  justify-content: center;
}

.drop {
  flex: none;
  width: 20px;
  height: 38px;
}

.drop::before,
.arrow {
  content: "";
  display: block;
  width: 0;
  height: 0;
  margin: auto;
  border: 6px solid transparent;
}

.drop::before {
  border-width: 5px;
  border-top-color: #000;
  border-bottom: 0;
}

.drop.disabled::before {
  border-top-color: #888;
}

.text-tool {
  flex: none;
  height: 38px;
  padding: 0 4px;
  border: 2px solid transparent;
}

.pressed {
  border-color: #808080 #fff #fff #808080;
  background: #dedcd8;
}

.more {
  flex: none;
  width: 16px;
  height: 32px;
  margin: 0 3px 0 14px;
}

.format .more {
  margin-left: auto;
}

.more svg {
  display: block;
  width: 16px;
  height: 28px;
}

.combo {
  position: relative;
  flex: none;
  height: 29px;
  background: #fff;
}

.combo.font {
  width: 221px;
  margin-right: 8px;
}

.combo.size {
  width: 64px;
  margin-right: 4px;
}

.combo select {
  width: 100%;
  height: 100%;
  padding: 0 2px;
  appearance: none;
}

.combo::after {
  content: "";
  position: absolute;
  right: 2px;
  top: 2px;
  width: 18px;
  height: 25px;
  background: #d6d3ce;
  pointer-events: none;
}

.combo::before {
  content: "";
  position: absolute;
  z-index: 1;
  right: 6px;
  top: 13px;
  border: 5px solid transparent;
  border-top-color: #000;
  border-bottom: 0;
}

.letter {
  font-family: "Liberation Serif", serif;
  font-size: 25px;
  font-weight: bold;
}

.letter-I {
  font-style: italic;
}

.letter-U {
  text-decoration: underline;
}

/* formula bar */
.formula-bar {
  display: flex;
  height: 34px;
  box-sizing: border-box;
  padding: 0 3px 0 2px;
  border-bottom: 3px solid #555;
}

.name-box {
  width: 165px;
  background: #fff;
}

.name-drop {
  width: 29px;
  background: #d6d3ce;
  border: 2px solid;
  border-color: #fff #404040 #404040 #fff;
}

.arrow.down {
  border-top-color: #000;
  border-bottom: 0;
}

.arrow.up {
  border-bottom-color: #000;
  border-top: 0;
}

.arrow.left {
  border-right-color: #000;
  border-left: 0;
}

.arrow.right {
  border-left-color: #000;
  border-right: 0;
}

.equals {
  width: 101px;
  padding-right: 7px;
  text-align: right;
  font-weight: bold;
  border-right: 2px solid #808080;
}

.formula {
  flex: 1;
  min-width: 0;
  background: #fff;
}

/* sheet */
.sheet {
  position: relative;
  display: flex;
  margin-right: 3px;
  border-left: 2px solid #555;
  background: #fff;
}

.chart {
  flex: 1;
  min-width: 0;
  display: block;
}

.chart text {
  font-family: "Liberation Sans", Arial, sans-serif;
}

.tick-text {
  font-size: 22px;
}

.note-text {
  font-size: 25px;
  fill: #800080;
}

.plot-title {
  font-size: 28px;
  font-weight: bold;
}

.axis-title {
  font-size: 26px;
  font-weight: bold;
}

/* scroll bars */
.scroll {
  display: flex;
}

.vertical {
  flex-direction: column;
  width: 26px;
}

.scroll-button,
.thumb {
  box-sizing: border-box;
  background: #d6d3ce;
  border: 2px solid;
  border-color: #fff #666 #666 #fff;
}

.scroll-button {
  flex: none;
  width: 26px;
  height: 26px;
}

.thumb {
  flex: 1;
}

.dither {
  flex: none;
  background: repeating-conic-gradient(#222 0% 25%, #eee 0% 50%) 0 0 / 4px 4px;
}

.dither-top {
  height: 39px;
}

.dither-bottom {
  height: 66px;
}

.dither-left {
  width: 18px;
}

.dither-right {
  width: 28px;
}

/* dialog */
.dialog {
  position: absolute;
  right: 46px;
  bottom: 72px;
  width: 816px;
  box-sizing: border-box;
  padding: 2px;
  background: #d6d3ce;
  border: 2px solid;
  border-color: #f4f4f4 #404040 #404040 #f4f4f4;
}

.dialog-title {
  display: flex;
  align-items: center;
  justify-content: space-between;
  height: 33px;
  padding: 0 4px 0 3px;
  font-weight: bold;
  color: #fff;
  background: linear-gradient(90deg, #0a246a, #a6caf0);
}

.dialog-title .win-button {
  color: #000;
}

.dialog-body {
  display: flex;
  justify-content: space-between;
  padding: 15px 16px 25px 15px;
}

.settings {
  width: 423px;
}

.fold-row {
  display: flex;
  align-items: flex-start;
  gap: 32px;
  padding-left: 74px;
  line-height: 26px;
  font-weight: bold;
}

.fold-row input {
  width: 98px;
  height: 38px;
  padding: 0 4px;
  background: #fff;
  border: 3px solid;
  border-color: #606060 #f4f4f4 #f4f4f4 #606060;
}

.mode-row {
  display: flex;
  align-items: center;
  margin-top: 26px;
  padding-left: 44px;
  line-height: 26px;
}

.mode-row label {
  margin: 0 28px 0 6px;
  white-space: nowrap;
}

.mode-row label:last-child {
  margin-right: 0;
}

.mode-row input {
  flex: none;
  width: 21px;
  height: 21px;
  appearance: none;
  border-radius: 50%;
  border: 3px solid;
  border-color: #606060 #fff #fff #606060;
  background: #fff;
}

.mode-row input:checked {
  background: radial-gradient(circle, #000 4px, #fff 5px);
}

.delta-label {
  display: block;
  margin-top: 108px;
  padding-left: 12px;
  line-height: 26px;
  font-weight: bold;
}

.slider-box {
  margin-top: 31px;
  height: 74px;
  box-sizing: border-box;
  padding: 2px 12px;
  border: 2px dotted #333;
}

.slider-box input {
  display: block;
  width: 100%;
  height: 38px;
  appearance: none;
}

.slider-box input::-webkit-slider-runnable-track {
  height: 8px;
  box-sizing: border-box;
  border: 2px solid;
  border-color: #808080 #fff #fff #808080;
  background: linear-gradient(#404040 50%, #fff 50%);
}

.slider-box input::-webkit-slider-thumb {
  appearance: none;
  width: 20px;
  height: 38px;
  margin-top: -17px;
  background:
    linear-gradient(to bottom right, transparent 38%, #606060 38%) right bottom / 10px 11px no-repeat,
    linear-gradient(to bottom left, transparent 38%, #fff 38%) left bottom / 10px 11px no-repeat,
    linear-gradient(#fff, #fff) 0 0 / 100% 2px no-repeat,
    linear-gradient(90deg, #fff 2px, #d6d3ce 2px 17px, #606060 17px);
  clip-path: polygon(0 0, 100% 0, 100% 71%, 50% 100%, 0 71%);
}

.slider-ticks {
  height: 7px;
  margin: 0 9px;
  background: repeating-linear-gradient(90deg, #000 0 2px, transparent 2px 4px);
}

.actions {
  display: flex;
  flex-direction: column;
  gap: 14px;
  width: 312px;
}

.actions button {
  height: 57px;
  padding-right: 6px;
  border: 3px solid;
  border-color: #f4f4f4 #505050 #505050 #f4f4f4;
}

/* sheet tabs */
.tab-row {
  display: flex;
  height: 28px;
  padding-left: 2px;
  padding-right: 3px;
  border-bottom: 2px solid #fff;
}

.nav-button {
  flex: none;
  width: 26px;
  height: 26px;
  border: 2px solid;
  border-color: #fff #808080 #808080 #fff;
}

.nav-button svg {
  display: block;
  width: 20px;
  height: 20px;
  margin: auto;
}

.tabs {
  flex: 964 1 0;
  display: flex;
  min-width: 0;
  height: 26px;
  box-shadow: inset 0 2px #808080;
}

.slant {
  flex: none;
  width: 18px;
  height: 26px;
}

.tab {
  height: 26px;
  padding: 0 6px;
  border-bottom: 2px solid #333;
  white-space: nowrap;
}

.tab.active {
  padding: 0 1px;
  font-weight: bold;
  background: #fff;
}

.splitter {
  flex: none;
  width: 10px;
  box-sizing: border-box;
  border-left: 2px solid #fff;
  border-right: 3px solid #333;
}

.horizontal {
  flex: 699 1 0;
}

.corner {
  flex: none;
  width: 26px;
}

/* status */
.status-bar {
  display: flex;
  align-items: center;
  height: 37px;
  padding: 0 9px 0 10px;
  box-sizing: border-box;
  border-bottom: 2px solid #fff;
}

.ready {
  flex: 1;
  font-size: 21px;
}

.cell {
  flex: none;
  width: 48px;
  height: 26px;
  margin-left: 5px;
  box-sizing: border-box;
  border: 2px solid;
  border-color: #808080 #fff #fff #808080;
}

.cell-1 {
  width: 60px;
}

.cell-2 {
  width: 228px;
}

.cell-4 {
  width: 61px;
}

.cell-6 {
  width: 59px;
}

.cell-5 {
  width: 52px;
}

.cell-7 {
  width: 50px;
}

.cell-8 {
  width: 40px;
}

/* taskbar */
.taskbar {
  display: flex;
  align-items: center;
  height: 46px;
  padding: 0 3px;
}

.start,
.task {
  flex: none;
  display: flex;
  align-items: center;
  height: 38px;
  padding: 0 4px;
  background: #d6d3ce;
  border: 2px solid;
  border-color: #fff #404040 #404040 #fff;
  white-space: nowrap;
}

.start {
  width: 144px;
  gap: 2px;
  font-weight: bold;
}

.launch {
  display: flex;
  flex: none;
  gap: 12px;
  width: 297px;
  padding-left: 9px;
  box-sizing: border-box;
}

.launch button {
  height: 28px;
}

.taskbar .grip {
  margin-right: 5px;
}

.launch ~ .grip {
  margin-right: 9px;
}

.task {
  width: 282px;
  gap: 3px;
  overflow: hidden;
}

.task.current {
  margin-left: 6px;
  font-weight: bold;
  border-color: #404040 #fff #fff #404040;
  background: repeating-conic-gradient(#fff 0% 25%, #dedcd8 0% 50%) 0 0 / 4px 4px;
}

.power,
.tray {
  display: flex;
  align-items: center;
  height: 40px;
  box-sizing: border-box;
  border: 2px solid;
  border-color: #808080 #fff #fff #808080;
}

.power {
  flex: none;
  width: 132px;
  margin-left: auto;
  padding-left: 3px;
}

.gauge {
  width: 78px;
  height: 30px;
  box-sizing: border-box;
  border: 2px solid;
  border-color: #fff #404040 #404040 #fff;
  background: linear-gradient(90deg, #80ff40 66%, #707470 66%);
  font-weight: bold;
  line-height: 26px;
  text-align: center;
}

.nub {
  width: 7px;
  height: 14px;
  margin-right: 8px;
  background: #c0c0c0;
  border: solid #808080;
  border-width: 2px 2px 2px 0;
  box-sizing: border-box;
}

.tray {
  flex: none;
  gap: 4px;
  width: 547px;
  margin-left: 10px;
  padding-left: 4px;
}

.lang {
  width: 28px;
  height: 28px;
  line-height: 28px;
  text-align: center;
  color: #fff;
  background: #000084;
}

time {
  flex: 1;
  text-align: right;
  padding-right: 27px;
}
</style>
